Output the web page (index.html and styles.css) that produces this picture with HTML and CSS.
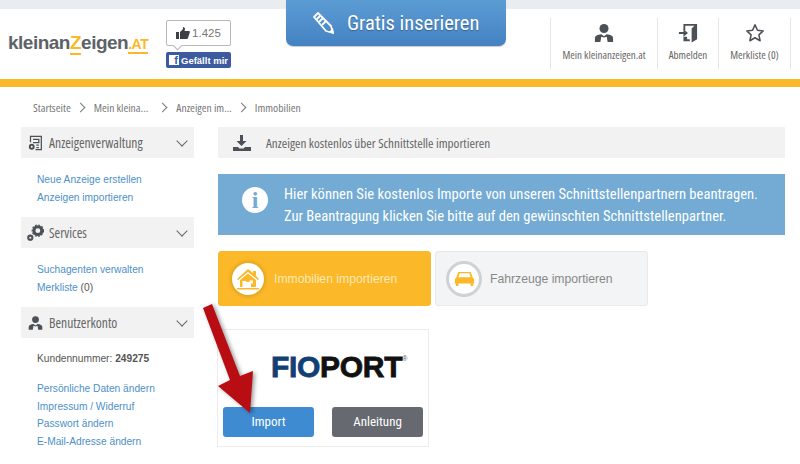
FILE: index.html
```html
<!DOCTYPE html>
<html lang="de">
	<head>
		<meta charset="UTF-8" />
		<meta name="viewport" content="width=device-width, initial-scale=1.0" />
		<title>Anzeigen importieren</title>
		<link rel="stylesheet" href="styles.css">
	</head>
	<body>
		<div class="topStrip"></div>

		<header>
			<a class="logo">kleinan<span class="logoZ">Z</span>eigen<span class="logoAt">.AT</span></a>

			<div class="like">
				<div class="likeCount">
					<svg width="14" height="12" viewBox="0 0 14 12"><path fill="#3c4146" d="M0 5h3v7H0zM4 5l3-3V0c1.500 0 2 1 2 2L8.500 4H13c1 0 1 1 .8 1.500L12 11c-.2.600-.6 1-1.200 1H4z"/></svg>
					1.425
				</div>
				<div class="likeButton"><span class="fbIcon">f</span>Gefällt mir</div>
			</div>

			<a class="gratis">
				<svg width="24" height="24" viewBox="0 0 24 24"><g fill="none" stroke="#fff" stroke-width="1.800" stroke-linejoin="round"><path d="M2 6l4-4 13 13 2 7-7-2z"/><path d="M4.500 8.500l4-4M7 11l4-4M10 14l4-4"/></g><path fill="#fff" d="M17 21l4-4 1 6z"/></svg>
				Gratis inserieren
			</a>

			<nav class="topNav">
				<a>
					<svg width="20" height="20" viewBox="0 0 22 22"><circle cx="11" cy="6" r="5" fill="#4b5157"/><path fill="#4b5157" d="M1 21v-4c0-3 3-4 7-4.500l3 2 3-2c4 .5 7 1.500 7 4.500v4H15l-1-6-3 1-3-1-1 6z"/></svg>
					<span>Mein kleinanzeigen.at</span>
				</a>
				<a>
					<svg width="20" height="20" viewBox="0 0 22 22"><path fill="#4b5157" d="M6 1h15v17l-6 3.500V6l3-3H8v5H6zM8 15h2v3h3v2H6v-5z"/><path fill="#4b5157" d="M1 10h5V7l5 4-5 4v-3H1z"/></svg>
					<span>Abmelden</span>
				</a>
				<a>
					<svg width="20" height="20" viewBox="0 0 22 22"><path fill="none" stroke="#4b5157" stroke-width="1.700" stroke-linejoin="round" d="M11 2l2.700 6 6.300.7-4.700 4.300 1.300 6.500L11 16.200 5.400 19.500 6.700 13 2 8.700 8.300 8z"/></svg>
					<span>Merkliste (0)</span>
				</a>
			</nav>
		</header>

		<div class="yellowBar"></div>

		<div class="crumbs">
			<a>Startseite</a><i class="chev"></i><a>Mein kleina...</a><i class="chev wide"></i><a>Anzeigen im...</a><i class="chev"></i><a>Immobilien</a>
		</div>

		<div class="content">
			<aside>
				<div class="sideHead">
					<svg width="15" height="18" viewBox="0 0 18 20"><g fill="none" stroke="#4b5157" stroke-width="1.500"><path d="M3 9V2h13v16H9"/><path d="M6 5.500h7v4H6M10 12.500h3M10 15.500h3"/></g><circle cx="4.500" cy="14.500" r="3.500" fill="#4b5157"/><circle cx="4.500" cy="14.500" r="1.200" fill="#f2f2f2"/></svg>
					<span>Anzeigenverwaltung</span>
					<i class="down"></i>
				</div>
				<ul class="sideLinks">
					<li><a>Neue Anzeige erstellen</a></li>
					<li><a>Anzeigen importieren</a></li>
				</ul>

				<div class="sideHead">
					<svg class="gearIcon" width="17" height="18" viewBox="0 0 18 18"><circle cx="11.500" cy="6.500" r="4.200" fill="none" stroke="#4b5157" stroke-width="3.200"/><circle cx="11.500" cy="6.500" r="6" fill="none" stroke="#4b5157" stroke-width="1.200" stroke-dasharray="2 1.500"/><circle cx="3.500" cy="14" r="2.200" fill="none" stroke="#4b5157" stroke-width="2.200"/></svg>
					<span>Services</span>
					<i class="down"></i>
				</div>
				<ul class="sideLinks">
					<li><a>Suchagenten verwalten</a></li>
					<li><a>Merkliste</a> (0)</li>
				</ul>

				<div class="sideHead">
					<svg width="15" height="18" viewBox="0 0 22 22"><circle cx="11" cy="6" r="5" fill="#4b5157"/><path fill="#4b5157" d="M1 21v-4c0-3 3-4 7-4.500l3 2 3-2c4 .5 7 1.500 7 4.500v4H15l-1-6-3 1-3-1-1 6z"/></svg>
					<span>Benutzerkonto</span>
					<i class="down"></i>
				</div>
				<p class="customer">Kundennummer: <b>249275</b></p>
				<ul class="sideLinks">
					<li><a>Persönliche Daten ändern</a></li>
					<li><a>Impressum / Widerruf</a></li>
					<li><a>Passwort ändern</a></li>
					<li><a>E-Mail-Adresse ändern</a></li>
				</ul>
			</aside>

			<main>
				<div class="mainHead">
					<svg width="18" height="16" viewBox="0 0 18 16"><path fill="#4b5157" d="M7 0h3v6h3.500L8.500 11 3.500 6H7zM0 12h5l1.500 1.500h4L12 12h6v4H0z"/></svg>
					<span>Anzeigen kostenlos über Schnittstelle importieren</span>
				</div>

				<div class="info">
					<div class="infoIcon">i</div>
					<p>Hier können Sie kostenlos Importe von unseren Schnittstellenpartnern beantragen.<br>Zur Beantragung klicken Sie bitte auf den gewünschten Schnittstellenpartner.</p>
				</div>

				<div class="tiles">
					<a class="tile active">
						<span class="tileIcon">
							<svg width="24" height="22" viewBox="0 0 24 22"><path fill="#fbb829" d="M12 1l5 4V3h3v5l3 3-1 1-10-8L2 12l-1-1zM4 12l8-6.500 8 6.500v7h-5v-5H9v5H4zM1 20h22v1.500H1z"/><rect x="13.500" y="12.500" width="3.500" height="3" fill="#fff"/><rect x="6.500" y="13" width="3.500" height="6" fill="#fff"/></svg>
						</span>
						Immobilien importieren
					</a>
					<a class="tile">
						<span class="tileIcon">
							<svg width="21" height="18" viewBox="0 0 24 20"><path fill="#fbb829" d="M5 2h14l2.500 6.500c1 .5 1.500 1.500 1.500 2.500v4h-1v3h-3v-3H5v3H2v-3H1v-4c0-1 .5-2 1.500-2.500zM6.500 3.500L5 8h14l-1.500-4.500z"/></svg>
						</span>
						Fahrzeuge importieren
					</a>
				</div>

				<div class="partner">
					<div class="partnerLogo"><span class="fio">FIO</span>PORT<sup>®</sup></div>
					<div class="partnerBtns">
						<a class="btn blue">Import</a>
						<a class="btn grey">Anleitung</a>
					</div>
				</div>
			</main>
		</div>

		<!-- red arrow drawn over the screenshot -->
		<svg class="arrow" width="60" height="116" viewBox="0 0 60 116">
			<path fill="#b80d12" d="M3 8l9-4 28 72 13-5-3 42-32-27 12-6z"/>
		</svg>
	</body>
</html>
```

FILE: styles.css
```css
* {
	box-sizing: border-box;
	margin: 0;
	padding: 0;
}

html, body {
	height: 464px;
	overflow: hidden;
}

body {
	background: #fff;
	color: #555;
	font-family: 'Liberation Sans', sans-serif;
	font-size: 11px;
	position: relative;
}

ul {
	list-style: none;
}

.topStrip {
	height: 9px;
	background: #e9edf0;
}

header {
	height: 70px;
	display: flex;
	align-items: flex-start;
	padding-left: 8px;
}

.logo {
	width: 158px;
	margin-top: 23px;
	font-size: 19px;
	font-weight: bold;
	color: #5d6266;
	letter-spacing: -0.5px;
	white-space: nowrap;
}

.logoZ {
	color: #fbb829;
	border-bottom: 2px solid #fbb829;
}

.logoAt {
	color: #fbb829;
	font-size: 14px;
	border-bottom: 2px solid #fbb829;
}

.like {
	width: 65px;
	margin-top: 11px;
}

.likeCount {
	height: 26px;
	border: 1px solid #b5b8bc;
	border-radius: 2px;
	display: flex;
	align-items: center;
	justify-content: center;
	gap: 2px;
	font-size: 11.500px;
	color: #777;
	position: relative;
}

.likeCount::after {
	content: "";
	position: absolute;
	left: 7px;
	bottom: -4px;
	width: 6px;
	height: 6px;
	background: #fff;
	border-right: 1px solid #b5b8bc;
	border-bottom: 1px solid #b5b8bc;
	transform: rotate(45deg);
}

.likeButton {
	height: 16px;
	margin-top: 6px;
	background: #3b5a9f;
	border-radius: 2px;
	color: #fff;
	font-size: 9.500px;
	font-weight: bold;
	display: flex;
	align-items: center;
	gap: 2px;
	padding-left: 3px;
	white-space: nowrap;
}

.fbIcon {
	width: 10px;
	height: 10px;
	background: #fff;
	color: #3b5a9f;
	font-size: 11px;
	line-height: 11px;
	text-align: right;
	padding-right: 1px;
}

.gratis {
	width: 220px;
	height: 46px;
	margin-top: -9px;
	margin-left: 55px;
	background: linear-gradient(to bottom, #5c9cd4, #4482c2);
	border-radius: 0 0 7px 7px;
	box-shadow: 0 1px 1px rgba(0, 0, 0, 0.2);
	color: #fff;
	font-family: 'Roboto', sans-serif;
	font-stretch: 75%;
	font-size: 20.500px;
	text-shadow: 0 1px 1px rgba(0, 0, 0, 0.3);
	display: flex;
	align-items: center;
	gap: 11px;
	padding-left: 26px;
}

.topNav {
	display: flex;
	margin-left: 44px;
	margin-top: 9px;
	height: 51px;
	border-left: 1px solid #e6e6e6;
}

.topNav a {
	display: flex;
	flex-direction: column;
	align-items: center;
	gap: 4px;
	padding-top: 5px;
	border-right: 1px solid #e6e6e6;
	font-family: 'Open Sans', sans-serif;
	font-stretch: 75%;
	font-size: 11px;
	color: #666;
	white-space: nowrap;
}

.topNav a:nth-child(1) { width: 107px; }
.topNav a:nth-child(2) { width: 61px; }
.topNav a:nth-child(3) { width: 72px; }

.yellowBar {
	height: 8px;
	background: #fbb829;
}

.crumbs {
	height: 40px;
	padding-left: 33px;
	display: flex;
	align-items: center;
	font-family: 'Open Sans', sans-serif;
	font-stretch: 75%;
	font-size: 11.600px;
	color: #777;
}

.chev {
	width: 7px;
	height: 7px;
	margin: 0 10px 0 6px;
	border-top: 1px solid #777;
	border-right: 1px solid #777;
	transform: rotate(45deg);
}

.chev.wide {
	margin: 0 10px 0 11px;
}

.content {
	display: flex;
	padding-left: 21px;
}

aside {
	width: 173px;
}

.sideHead {
	height: 31px;
	background: #f2f2f2;
	display: flex;
	align-items: center;
	gap: 6px;
	padding-left: 7px;
	font-family: 'Open Sans', sans-serif;
	font-stretch: 75%;
	font-size: 13.600px;
	color: #666;
}

.gearIcon {
	margin: 0 -1px;
}

.down {
	width: 8px;
	height: 8px;
	margin-left: auto;
	margin-right: 8px;
	margin-top: -4px;
	border-right: 1px solid #666;
	border-bottom: 1px solid #666;
	transform: rotate(45deg);
}

.sideLinks {
	padding: 13px 0 11px 16px;
	line-height: 17.500px;
	font-size: 10.200px;
	color: #555;
}

.sideLinks a {
	color: #4d90c9;
}

.customer {
	padding: 12px 0 0 16px;
	line-height: 17px;
	font-size: 10.200px;
	color: #555;
}

main {
	width: 567px;
	margin-left: 24px;
}

.mainHead {
	height: 31px;
	background: #f2f2f2;
	display: flex;
	align-items: center;
	gap: 15px;
	padding-left: 15px;
	font-family: 'Open Sans', sans-serif;
	font-stretch: 75%;
	font-size: 13.200px;
	color: #666;
}

.info {
	height: 61px;
	margin-top: 16px;
	background: #73abd4;
	display: flex;
	align-items: center;
	padding-left: 24px;
	color: #fff;
}

.info p {
	margin-left: 16px;
	margin-top: 1px;
	font-family: 'Roboto', sans-serif;
	font-stretch: 75%;
	font-size: 14.600px;
	line-height: 22px;
	white-space: nowrap;
}

.infoIcon {
	width: 26px;
	height: 26px;
	margin-top: -9px;
	border-radius: 50%;
	background: #fff;
	color: #73abd4;
	font-family: 'Liberation Serif', serif;
	font-size: 24px;
	font-weight: bold;
	line-height: 26px;
	text-align: center;
}

.tiles {
	display: flex;
	gap: 4px;
	margin-top: 16px;
}

.tile {
	height: 55px;
	width: 213px;
	border-radius: 3px;
	display: flex;
	align-items: center;
	gap: 8px;
	padding-left: 10px;
	font-size: 12.200px;
	background: #f3f4f6;
	border: 1px solid #e8e9eb;
	color: #888;
}

.tile.active {
	gap: 10px;
	background: #fbb829;
	border-color: #fbb829;
	color: #fde9b5;
}

.tileIcon {
	width: 36px;
	height: 36px;
	border-radius: 50%;
	background: #fff;
	border: 3px solid #cfd1d4;
	display: flex;
	align-items: center;
	justify-content: center;
}

.tile.active .tileIcon {
	border: 0;
	box-shadow: 0 0 3px 2px #e5a51f;
	margin-left: 3px;
	width: 32px;
	height: 32px;
}

.partner {
	width: 212px;
	height: 118px;
	margin-top: 23px;
	margin-left: -1px;
	border: 1px solid #ececec;
	padding: 0 5px;
}

.partnerLogo {
	height: 77px;
	padding: 20px 0 0 48px;
	font-size: 30px;
	font-weight: bold;
	color: #111;
	letter-spacing: -0.3px;
	white-space: nowrap;
	-webkit-text-stroke: 0.8px currentColor;
}

.partnerLogo .fio {
	color: #123f74;
}

.partnerLogo sup {
	font-size: 7px;
	font-weight: normal;
	vertical-align: 16px;
	color: #555;
	-webkit-text-stroke: 0;
}

.partnerBtns {
	display: flex;
	justify-content: space-between;
}

.btn {
	width: 91px;
	height: 30px;
	border-radius: 3px;
	color: #fff;
	font-family: 'Roboto', sans-serif;
	font-stretch: 75%;
	font-size: 13px;
	line-height: 30px;
	text-align: center;
}

.btn.blue {
	background: #3f8bd2;
}

.btn.grey {
	background: #666a70;
}

.arrow {
	position: absolute;
	left: 200px;
	top: 300px;
	filter: drop-shadow(2px 1px 2px rgba(0, 0, 0, 0.4));
}
```
